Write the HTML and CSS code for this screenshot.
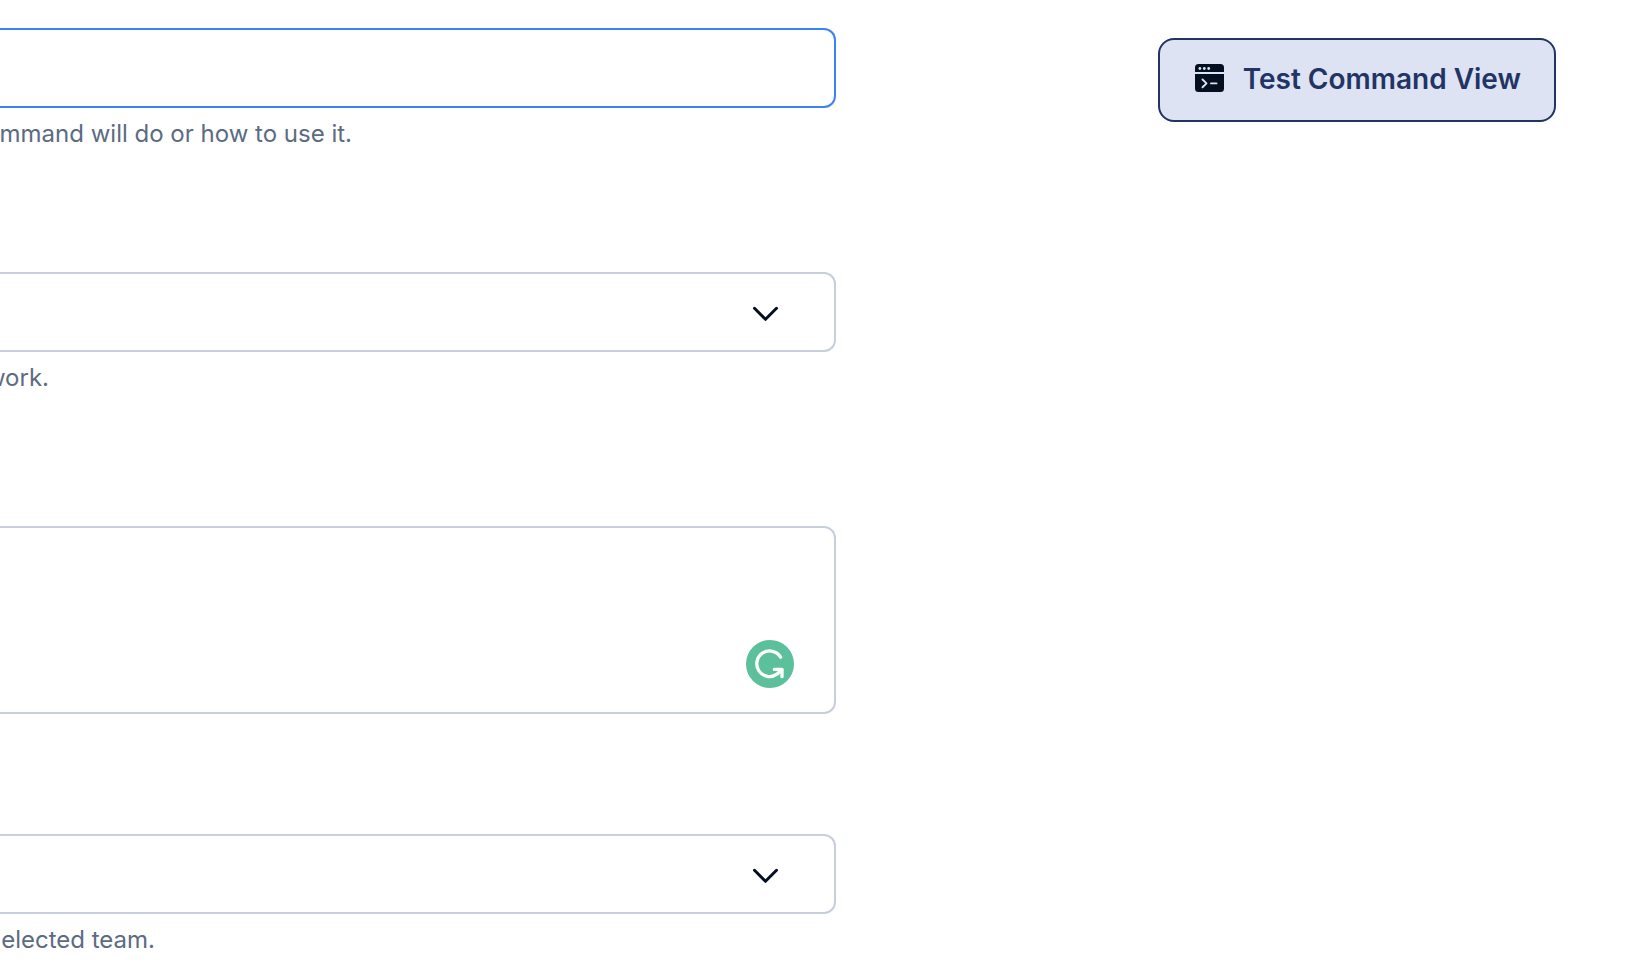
FILE: index.html
```html
<!DOCTYPE html>
<html lang="en">
<head>
<meta charset="utf-8">
<meta name="viewport" content="width=device-width, initial-scale=1">
<title>Command settings</title>
<link rel="stylesheet" href="styles.css">
</head>
<body>
<main class="page">
  <form class="form">
    <div class="field field-description">
      <input class="control control-active" type="text" aria-label="Description" aria-describedby="description-help">
      <p class="help help-description" id="description-help">ommand will do or how to use it.</p>
    </div>
    <div class="field field-work">
      <div class="select-wrap">
        <select class="control" aria-label="Mode" aria-describedby="mode-help"><option></option></select>
        <svg class="chevron" viewBox="0 0 28 18" aria-hidden="true"><path d="M2.500 3.300 13.500 14.300 24.500 3.300"/></svg>
      </div>
      <p class="help help-mode" id="mode-help">work.</p>
    </div>
    <div class="field field-prompt">
      <textarea class="control control-area" aria-label="Prompt"></textarea>
      <svg class="badge" viewBox="0 0 48 48" aria-hidden="true">
        <circle cx="24" cy="24" r="24" fill="#5bc09b"/>
        <g fill="none" stroke="#fff" stroke-width="3.300" stroke-linecap="round" stroke-linejoin="round">
          <path d="M34.600 17.200A12.800 12.800 0 1 0 31 34.200L35.700 29.600"/>
          <path d="M28.300 29.400H36V36.700"/>
        </g>
      </svg>
    </div>
    <div class="field">
      <div class="select-wrap">
        <select class="control" aria-label="Team" aria-describedby="team-help"><option></option></select>
        <svg class="chevron" viewBox="0 0 28 18" aria-hidden="true"><path d="M2.500 3.300 13.500 14.300 24.500 3.300"/></svg>
      </div>
      <p class="help help-team" id="team-help">elected team.</p>
    </div>
  </form>
  <aside class="actions">
    <button class="test-button" type="button">
      <svg class="terminal" viewBox="0 0 30 28" aria-hidden="true">
        <path fill="#04101f" d="M3.500 0h22A3.500 3.500 0 0 1 29 3.500V8H0V3.500A3.500 3.500 0 0 1 3.500 0ZM0 10h29v14.500A3.500 3.500 0 0 1 25.500 28h-22A3.500 3.500 0 0 1 0 24.500Z"/>
        <g fill="#dde3f3"><circle cx="4.900" cy="4.500" r="1.400"/><circle cx="9.300" cy="4.500" r="1.400"/><circle cx="13.700" cy="4.500" r="1.400"/></g>
        <path d="m7.500 15.500 4 3.900-4 3.900M16 19.400h5.500" fill="none" stroke="#dde3f3" stroke-width="1.900" stroke-linecap="round" stroke-linejoin="round"/>
      </svg>
      <span>Test Command View</span>
    </button>
  </aside>
</main>
</body>
</html>
```
FILE: styles.css
```css
* {
  box-sizing: border-box;
}

body {
  margin: 0;
  background: #fff;
  font-family: Inter, "Liberation Sans", sans-serif;
}

.page {
  display: grid;
  grid-template-columns: minmax(0, 836fr) minmax(0, 800fr);
  padding-top: 28px;
}

.form {
  display: flex;
  flex-direction: column;
}

.field {
  position: relative;
}

.field-description {
  margin-bottom: 122px;
}

.field-work {
  margin-bottom: 132px;
}

.field-prompt {
  margin-bottom: 120px;
}

/* The fields run off the left side, so only the right corners are rounded. */
.control {
  display: block;
  width: 100%;
  height: 80px;
  margin: 0;
  padding: 0 80px 0 24px;
  border: 2px solid #c8ceda;
  border-left: 0;
  border-radius: 0 12px 12px 0;
  background: #fff;
  color: #04101f;
  font: inherit;
  font-size: 24px;
  appearance: none;
  outline: 0;
}

.control-active {
  border-color: #3b82f6;
}

.control-area {
  height: 188px;
  padding: 24px;
  resize: none;
}

.select-wrap {
  position: relative;
}

.chevron {
  position: absolute;
  top: 33px;
  right: 56px;
  width: 28px;
  height: 18px;
  fill: none;
  stroke: #04101f;
  stroke-width: 3;
  stroke-linecap: round;
  stroke-linejoin: round;
  pointer-events: none;
}

.badge {
  position: absolute;
  right: 42px;
  bottom: 26px;
  width: 48px;
  height: 48px;
}

.help {
  display: flex;
  justify-content: flex-end;
  margin: 10px 0 0;
  overflow: hidden;
  color: #5c6b82;
  font-size: 24px;
  line-height: 32px;
  white-space: nowrap;
}

.help-description {
  width: 352px;
}

.help-mode {
  width: 49px;
}

.help-team {
  width: 155px;
}

.actions {
  display: flex;
  justify-content: flex-end;
  align-items: flex-start;
  padding: 10px 80px 0 0;
}

.test-button {
  display: flex;
  align-items: center;
  gap: 18px;
  height: 84px;
  padding: 0 33px 2px 35px;
  border: 2px solid #223464;
  border-radius: 16px;
  background: #dde3f3;
  color: #223464;
  font: inherit;
  font-size: 28px;
  font-weight: 600;
  line-height: 36px;
  white-space: nowrap;
}

.terminal {
  flex: none;
  width: 30px;
  height: 28px;
  margin-bottom: 2px;
}
```
